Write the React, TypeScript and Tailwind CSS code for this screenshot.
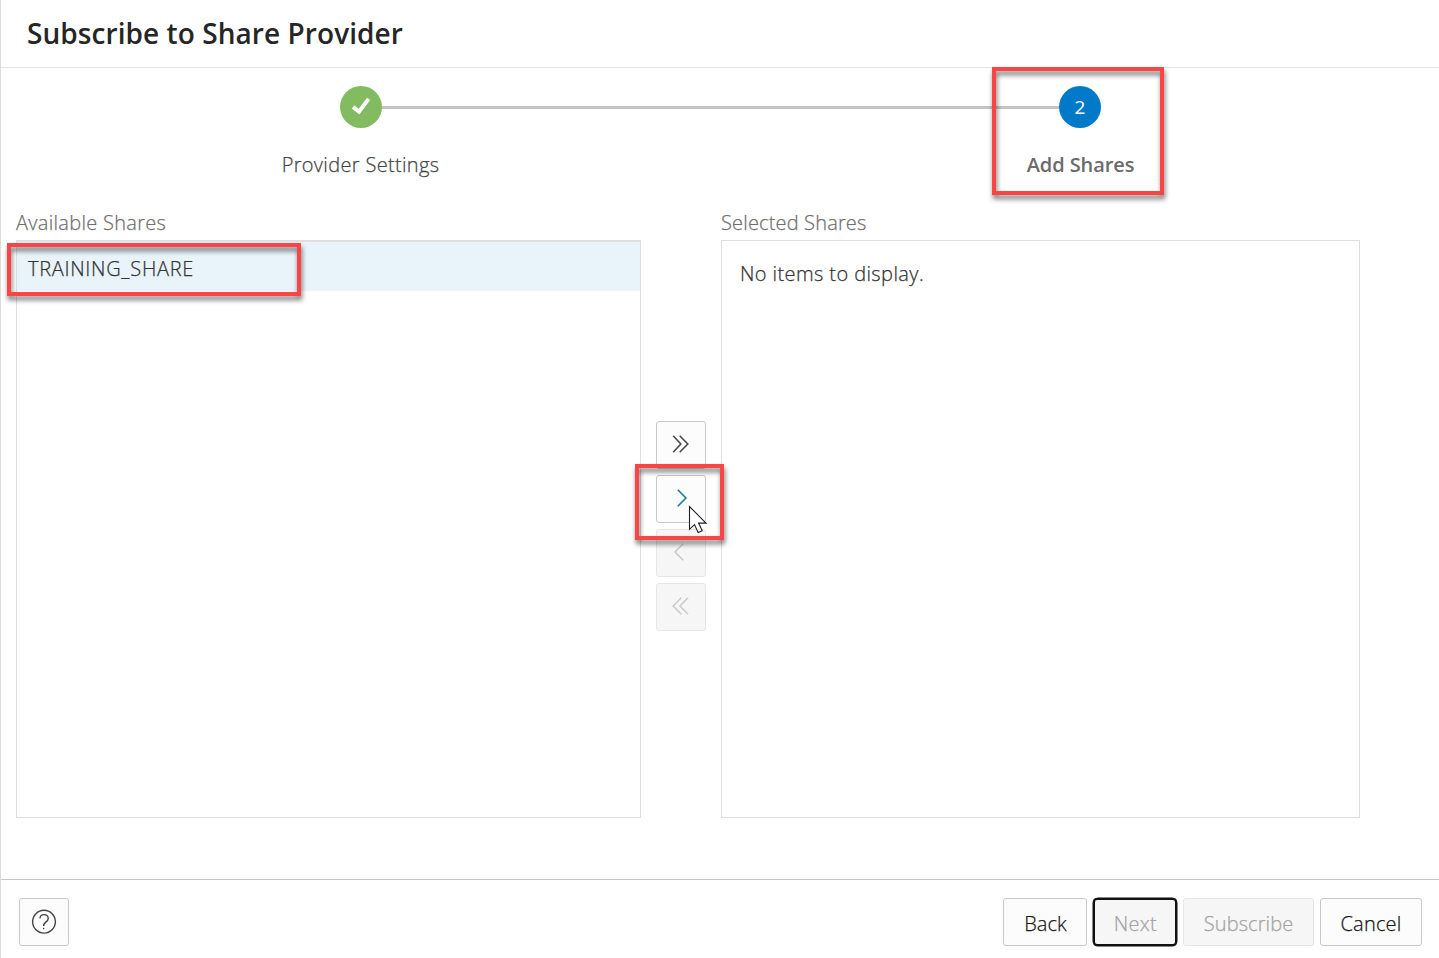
import React from 'react';

const stroke = { fill: 'none', strokeWidth: 1.6 } as const;

function MoveButton({ disabled, children }: { disabled?: boolean; children: React.ReactNode }) {
  return (
    <button
      className={
        disabled
          ? 'flex h-12 w-[50px] items-center justify-center rounded-[3px] border border-[#e6e6e6] bg-[#f6f6f6] pb-[2px]'
          : 'flex h-12 w-[50px] items-center justify-center rounded-[3px] border border-[#c8c8c8] bg-[#fcfcfc] pb-[2px]'
      }
    >
      {children}
    </button>
  );
}

function Highlight({ className }: { className: string }) {
  return (
    <div
      className={`pointer-events-none absolute border-4 border-[#fb4444] drop-shadow-[1px_4px_2.5px_rgba(0,0,0,0.55)] ${className}`}
    />
  );
}

export default function App() {
  return (
    <div className="relative flex h-[958px] w-[1439px] flex-col overflow-hidden border-l border-[#dcdcdc] bg-white font-['Open_Sans','Noto_Sans',sans-serif] text-[20px] leading-[28px] font-light whitespace-nowrap text-[#333] [-webkit-text-stroke:0.25px]">
      <header className="flex h-[68px] shrink-0 items-center border-b border-[#e4e4e4] pb-[2px] pl-[26px]">
        <h1 className="text-[28px] leading-[40px] font-semibold tracking-[0.07px] text-[#262626] [-webkit-text-stroke:0]">Subscribe to Share Provider</h1>
      </header>

      <div className="grid h-[137px] shrink-0 grid-cols-[719px_719px]">
        <div className="flex flex-col items-center pt-[18px]">
          <div className="grid w-full grid-cols-[1fr_42px_1fr] items-center">
            <span />
            <span className="flex size-[42px] items-center justify-center rounded-full bg-[#82bb60]">
              <svg width="20" height="20" viewBox="0 0 20 20" fill="none" stroke="#fff" strokeWidth="4">
                <path d="M2 9.9 8 14.7 17.6 1.9" />
              </svg>
            </span>
            <span className="h-[3px] bg-[#c4c4c4]" />
          </div>
          <span className="mt-[23px] tracking-[0.33px] text-[#444]">Provider Settings</span>
        </div>
        <div className="flex flex-col items-center pt-[18px]">
          <div className="grid w-full grid-cols-[1fr_42px_1fr] items-center">
            <span className="h-[3px] bg-[#c4c4c4]" />
            <span className="flex size-[42px] items-center justify-center rounded-full bg-[#007ac8] pl-px text-[19px] font-normal text-white [-webkit-text-stroke:0]">2</span>
            <span />
          </div>
          <span className="mt-[23px] pl-[2px] font-semibold tracking-[-0.08px] text-[#6b6b6b] [-webkit-text-stroke:0]">Add Shares</span>
        </div>
      </div>

      <main className="flex h-[674px] shrink-0 pl-[15px]">
        <section className="w-[625px]">
          <h2 className="h-[35px] pt-1 font-light tracking-[0.3px] text-[#6f6f6f]">Available Shares</h2>
          <div className="h-[578px] border border-[#dfdfdf]">
            <div className="h-[50px] border-t border-[#dfe3e6] bg-[#e8f3fa] pt-[13px] pl-[11px] tracking-[0.7px]">TRAINING_SHARE</div>
          </div>
        </section>
        <div className="flex w-20 flex-col items-center gap-1.5 pt-[216px]">
          <MoveButton>
            <svg width="18" height="18" viewBox="0 0 18 18" stroke="#4a4a4a" {...stroke}>
              <path d="M1.2.8 8.8 9 1.2 17.2M7.7.8 15.8 9 7.7 17.2" />
            </svg>
          </MoveButton>
          <MoveButton>
            <svg width="18" height="18" viewBox="0 0 18 18" stroke="#137da5" {...stroke}>
              <path d="M5.8.8 13.9 9 5.8 17.2" />
            </svg>
          </MoveButton>
          <MoveButton disabled>
            <svg width="18" height="18" viewBox="0 0 18 18" stroke="#cacaca" {...stroke}>
              <path d="M11.2.8 3 9l8.2 8.2" />
            </svg>
          </MoveButton>
          <MoveButton disabled>
            <svg width="18" height="18" viewBox="0 0 18 18" stroke="#cacaca" {...stroke}>
              <path d="M9.3.8 1.2 9l8.1 8.2M16 .8 8 9l8 8.2" />
            </svg>
          </MoveButton>
        </div>
        <section className="w-[639px]">
          <h2 className="h-[35px] pt-1 font-light tracking-[0.16px] text-[#6f6f6f]">Selected Shares</h2>
          <div className="h-[578px] border border-[#dfdfdf] pt-[19px] pl-[18px] tracking-[0.4px]">No items to display.</div>
        </section>
      </main>

      <footer className="flex h-[79px] shrink-0 items-start border-t border-[#c8c8c8] pt-[18px] pr-[17px] pl-[18px]">
        <button className="flex h-12 w-[50px] items-center justify-center rounded-[3px] border border-[#c8c8c8] bg-[#fcfcfc]">
          <svg width="26" height="26" viewBox="0 0 26 26" fill="none" stroke="#444" strokeWidth="1.4">
            <circle cx="13" cy="12.7" r="11.4" />
            <path d="M9 9.6c0-2.5 1.6-4 4-4s4.2 1.4 4.2 3.8c0 3.5-4.6 3.5-4.6 7.6" />
            <circle cx="12.6" cy="19.5" r=".8" fill="#444" stroke="none" />
          </svg>
        </button>
        <div className="ml-auto flex">
          <button className="h-12 w-[84px] rounded-[3px] border border-[#c8c8c8] bg-[#fcfcfc] pt-1 pl-px text-[#161616]">Back</button>
          <div className="ml-1.5 h-12 w-[84px] rounded-[5px] bg-[#f6f6f6] ring-[0.5px] ring-[#111]">
            <button className="h-12 w-[84px] rounded-[4px] border-2 border-[#111] pt-1 pl-px tracking-[0.3px] text-[#a3a3a3]">Next</button>
          </div>
          <button className="ml-1.5 h-12 w-[131px] rounded-[3px] border border-[#e6e6e6] bg-[#f6f6f6] pt-1 tracking-[0.1px] text-[#a3a3a3]">Subscribe</button>
          <button className="ml-1.5 h-12 w-[102px] rounded-[3px] border border-[#c8c8c8] bg-[#fcfcfc] pt-1 tracking-[0.2px] text-[#161616]">Cancel</button>
        </div>
      </footer>

      <Highlight className="top-[67px] left-[991px] h-[128px] w-[172px]" />
      <Highlight className="top-[243px] left-[6px] h-[53px] w-[294px]" />
      <Highlight className="top-[464px] left-[634px] h-[76px] w-[89px]" />

      <svg className="absolute top-[505px] left-[687px]" width="22" height="30" viewBox="0 0 22 30" fill="#fff" stroke="#1c1c28" strokeWidth="1.1">
        <path d="M1.5 1.5v22.8l5-4.7 3.6 7.9 4.1-1.8-3.6-7.6h7.4z" />
      </svg>
    </div>
  );
}
